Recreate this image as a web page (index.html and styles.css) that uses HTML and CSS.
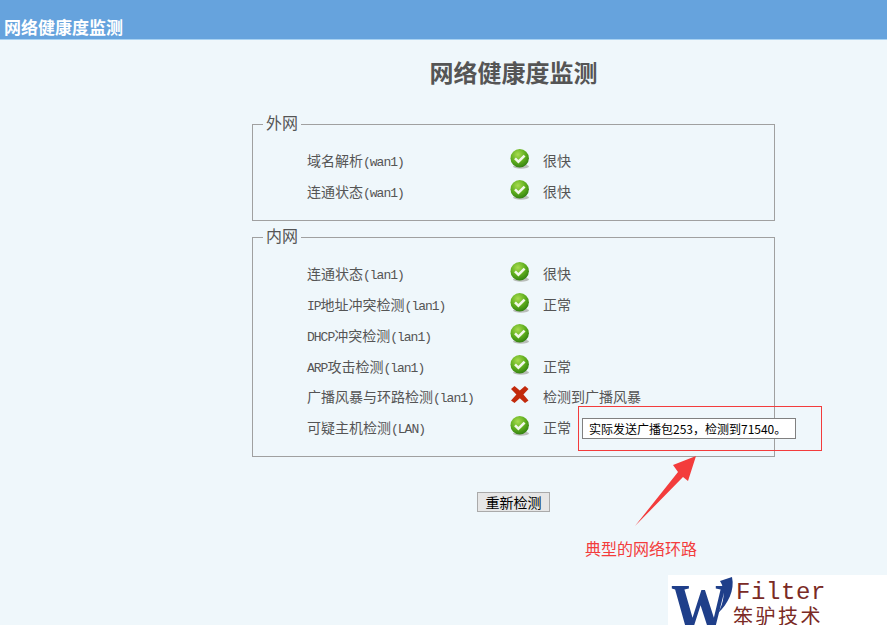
FILE: index.html
```html
<!DOCTYPE html>
<html lang="zh-CN">
<head>
    <meta charset="UTF-8">
    <meta name="viewport" content="width=device-width, initial-scale=1.0">
    <title>网络健康度监测</title>
    <link rel="stylesheet" href="styles.css">
</head>
<body>

    <svg width="0" height="0" class="defs">
        <defs>
            <radialGradient id="ballGreen" cx="40%" cy="30%" r="75%">
                <stop offset="0" stop-color="#a8dc4e"/>
                <stop offset="0.55" stop-color="#5fae1e"/>
                <stop offset="1" stop-color="#2f7d10"/>
            </radialGradient>
            <symbol id="iconOk" viewBox="0 0 20 20">
                <ellipse cx="11" cy="17.5" rx="8" ry="2.2" fill="#b9bdb9"/>
                <circle cx="9.7" cy="9.2" r="9.2" fill="url(#ballGreen)"/>
                <path d="M5 9.4 L8.4 12.6 L14.6 6.6" fill="none" stroke="#f2f8ea" stroke-width="2.6"/>
            </symbol>
            <symbol id="iconBad" viewBox="0 0 20 20">
                <path d="M1 4 L4.5 1 L9.8 5.6 L15 1 L18.5 4 L13.4 9.5 L18.5 15.5 L15 18 L9.8 13.2 L4.5 18 L1 15.5 L6.4 9.5 Z" fill="#c22a0c"/>
            </symbol>
        </defs>
    </svg>

    <header class="top-bar">网络健康度监测</header>

    <main class="content">
        <h1>网络健康度监测</h1>

        <fieldset>
            <legend>外网</legend>
            <div class="row">
                <span class="name">域名解析<span class="latin">(wan1)</span></span>
                <svg class="icon"><use href="#iconOk"/></svg>
                <span>很快</span>
            </div>
            <div class="row">
                <span class="name">连通状态<span class="latin">(wan1)</span></span>
                <svg class="icon"><use href="#iconOk"/></svg>
                <span>很快</span>
            </div>
        </fieldset>

        <fieldset>
            <legend>内网</legend>
            <div class="row">
                <span class="name">连通状态<span class="latin">(lan1)</span></span>
                <svg class="icon"><use href="#iconOk"/></svg>
                <span>很快</span>
            </div>
            <div class="row">
                <span class="name"><span class="latin">IP</span>地址冲突检测<span class="latin">(lan1)</span></span>
                <svg class="icon"><use href="#iconOk"/></svg>
                <span>正常</span>
            </div>
            <div class="row">
                <span class="name"><span class="latin">DHCP</span>冲突检测<span class="latin">(lan1)</span></span>
                <svg class="icon"><use href="#iconOk"/></svg>
                <span></span>
            </div>
            <div class="row">
                <span class="name"><span class="latin">ARP</span>攻击检测<span class="latin">(lan1)</span></span>
                <svg class="icon"><use href="#iconOk"/></svg>
                <span>正常</span>
            </div>
            <div class="row">
                <span class="name">广播风暴与环路检测<span class="latin">(lan1)</span></span>
                <svg class="icon"><use href="#iconBad"/></svg>
                <span>检测到广播风暴</span>
            </div>
            <div class="row">
                <span class="name">可疑主机检测<span class="latin">(LAN)</span></span>
                <svg class="icon"><use href="#iconOk"/></svg>
                <span>正常</span>
            </div>
        </fieldset>

        <div class="actions">
            <button type="button">重新检测</button>
        </div>
    </main>

    <!-- annotations pasted over the screenshot -->
    <div class="note-box"></div>
    <div class="note-tip">实际发送广播包253，检测到71540。</div>
    <svg class="note-arrow" width="70" height="80" viewBox="0 0 70 80">
        <path d="M0 72 L43 18 L48 23 Z M38 11 L61 2 L53 27 Z M43 18 L38 11 L53 27 L48 23 Z" fill="#f33c3c"/>
    </svg>
    <div class="note-text">典型的网络环路</div>

    <div class="logo">
        <span class="logo-w">W</span>
        <svg class="logo-swoosh" width="20" height="40" viewBox="0 0 20 40">
            <path d="M5 6 L17 2 C20 15 13 29 3 38 C9 28 11 15 5 6 Z" fill="#1f3f8a"/>
        </svg>
        <div class="logo-name">
            <span class="logo-en">Filter</span>
            <span class="logo-cn">笨驴技术</span>
        </div>
    </div>

</body>
</html>
```

FILE: styles.css
```css
html, body {
    height: 100%;
}

body {
    margin: 0;
    position: relative;
    overflow: hidden;
    background-color: #eff7fb;
    color: #555;
    font-family: "Noto Sans CJK SC", "Liberation Sans", sans-serif;
    font-size: 14px;
}

.defs {
    position: absolute;
}

.top-bar {
    box-sizing: border-box;
    height: 40px;
    padding: 0 0 1px 4px;
    display: flex;
    align-items: flex-end;
    background-color: #66a3dd;
    border-bottom: 1px solid #a8d2f2;
    color: #fff;
    font-size: 17px;
    font-weight: bold;
    line-height: 22px;
}

.content {
    width: 523px;
    margin-left: 252px;
}

h1 {
    margin: 15px 0 25px;
    color: #555;
    font-size: 24px;
    line-height: 34px;
    text-align: center;
}

fieldset {
    margin: 0 0 6.6px;
    padding: 11px 0 13px;
    border: 1px solid #a0a0a0;
}

legend {
    margin-left: 10px;
    padding: 0 3px 4px;
    font-size: 16px;
    line-height: 16px;
}

.row {
    display: flex;
    height: 30.8px;
    padding-left: 54px;
    line-height: 30.8px;
}

.name {
    width: 203px;
}

.latin {
    font-family: "Liberation Mono", monospace;
    font-size: 13px;
    letter-spacing: -1px;
}

.icon {
    width: 20px;
    height: 20px;
    margin: 4px 13px 0 0;
}

.actions {
    margin-top: 35px;
    text-align: center;
}

button {
    width: 73px;
    height: 20px;
    padding: 0;
    background-color: #e6e6e6;
    border: 1px solid #aaa;
    color: #000;
    font-family: inherit;
    font-size: 14px;
    line-height: 18px;
}

.note-box {
    position: absolute;
    left: 578px;
    top: 406px;
    width: 244px;
    height: 45px;
    box-sizing: border-box;
    border: 1px solid #f33c3c;
}

.note-tip {
    position: absolute;
    left: 582px;
    top: 418px;
    width: 214px;
    height: 21px;
    box-sizing: border-box;
    padding-left: 6px;
    background-color: #fff;
    border: 1px solid #808080;
    color: #000;
    font-size: 12px;
    line-height: 19px;
    white-space: nowrap;
}

.note-arrow {
    position: absolute;
    left: 635px;
    top: 454px;
}

.note-text {
    position: absolute;
    left: 585px;
    top: 537px;
    color: #f33c3c;
    font-size: 16px;
    line-height: 22px;
}

.logo {
    position: absolute;
    left: 668px;
    right: 0;
    bottom: 0;
    height: 50px;
    overflow: hidden;
    background-color: #fff;
}

.logo-w {
    position: absolute;
    left: 3px;
    top: -3px;
    color: #1f3f8a;
    font-family: "Liberation Serif", serif;
    font-size: 58px;
    font-weight: bold;
    line-height: 60px;
    transform: scaleY(1.25);
    transform-origin: left top;
}

.logo-swoosh {
    position: absolute;
    left: 47px;
    top: 0;
}

.logo-name {
    position: absolute;
    left: 65px;
    top: 5px;
    display: flex;
    flex-direction: column;
    color: #7a2a25;
}

.logo-en {
    padding-left: 3px;
    font-family: "Liberation Mono", monospace;
    font-size: 24px;
    letter-spacing: 0.6px;
    line-height: 26px;
}

.logo-cn {
    font-size: 20px;
    letter-spacing: 2.5px;
    line-height: 19px;
}
```
